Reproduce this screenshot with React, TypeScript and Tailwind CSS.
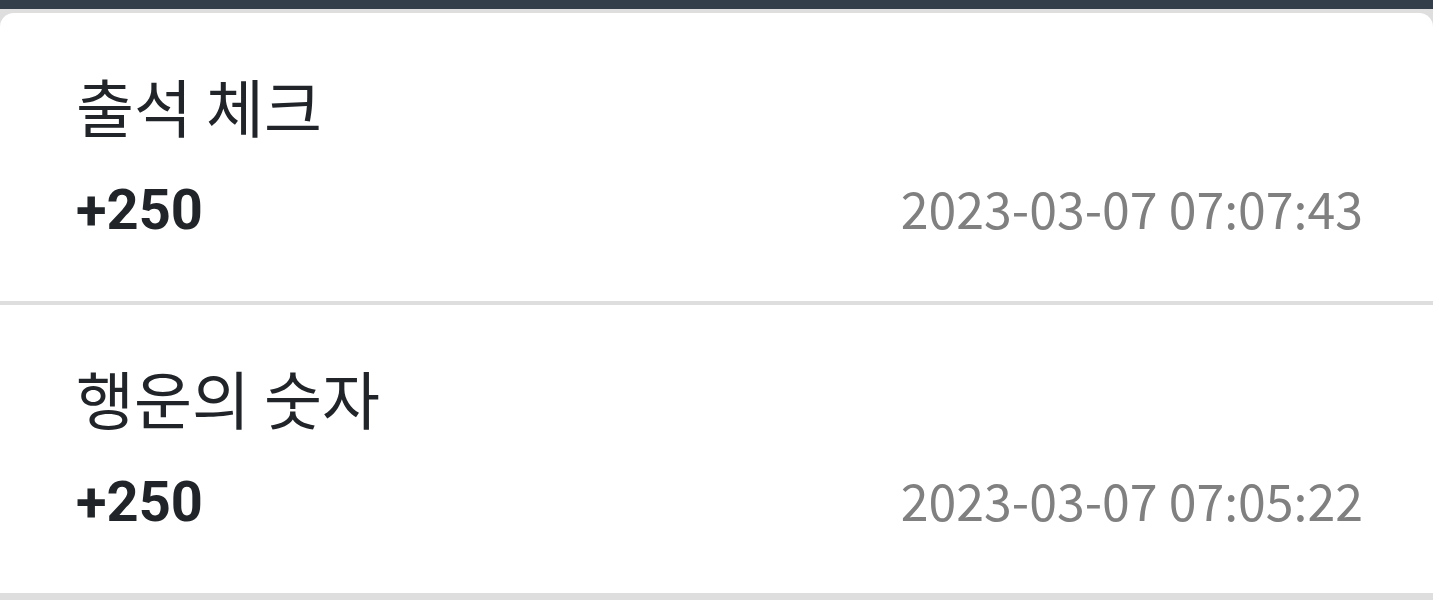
import React from 'react';

interface HistoryItem {
  title: string;
  amount: string;
  date: string;
}

const items: HistoryItem[] = [
  { title: '출석 체크', amount: '+250', date: '2023-03-07 07:07:43' },
  { title: '행운의 숫자', amount: '+250', date: '2023-03-07 07:05:22' },
];

const App: React.FC = () => {
  return (
    <div className="h-[600px] w-full overflow-hidden bg-[#dedede] font-['Roboto','Noto_Sans_CJK_KR',sans-serif]">
      {/* Top bar */}
      <div className="h-[9px] bg-[#343d4a]"></div>

      {/* Point history list */}
      <div className="mt-[4px] rounded-t-[14px] bg-white">
        {items.map((item, i) => (
          <div key={i} className="h-[292px] border-b-[4px] border-[#dedede] pl-[76px] pr-[70px] pt-[50px]">
            <div className="text-[63px] leading-[84px] text-[#212529] font-['Noto_Sans_CJK_KR',sans-serif]">
              {item.title}
            </div>
            <div className="mt-[28px] flex items-baseline justify-between">
              <span className="text-[56px] leading-[64px] font-bold text-[#212529]">{item.amount}</span>
              <span className="text-[50px] leading-[64px] text-[#808080] font-['Noto_Sans_CJK_KR',sans-serif]">{item.date}</span>
            </div>
          </div>
        ))}
      </div>
    </div>
  );
};

export default App;
